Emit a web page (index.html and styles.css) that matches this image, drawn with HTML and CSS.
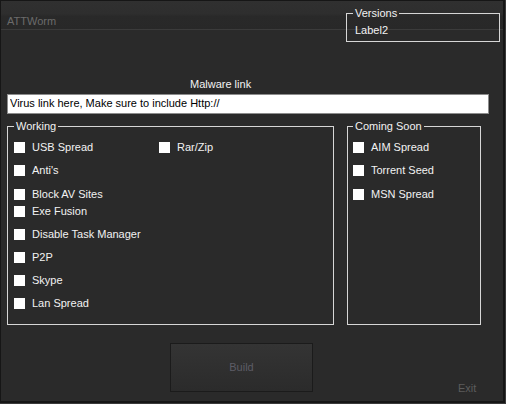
FILE: index.html
```html
<!DOCTYPE html>
<html>
<head>
<meta charset="utf-8">
<title>ATTWorm</title>
<link rel="stylesheet" href="styles.css">
</head>
<body>
<div class="window">
  <div class="titlebar"><span class="title">ATTWorm</span></div>
  <fieldset class="group versions">
    <legend>Versions</legend>
    <div class="version-label">Label2</div>
  </fieldset>
  <div class="content">
    <div class="link-label">Malware link</div>
    <input class="link-input" type="text" value="Virus link here, Make sure to include Http://">
    <div class="groups">
      <fieldset class="group working">
        <legend>Working</legend>
        <div class="checks working-checks">
          <label class="check"><span class="box"></span>USB Spread</label>
          <label class="check rar"><span class="box"></span>Rar/Zip</label>
          <label class="check"><span class="box"></span>Anti's</label>
          <label class="check"><span class="box"></span>Block AV Sites</label>
          <label class="check"><span class="box"></span>Exe Fusion</label>
          <label class="check"><span class="box"></span>Disable Task Manager</label>
          <label class="check"><span class="box"></span>P2P</label>
          <label class="check"><span class="box"></span>Skype</label>
          <label class="check"><span class="box"></span>Lan Spread</label>
        </div>
      </fieldset>
      <fieldset class="group soon">
        <legend>Coming Soon</legend>
        <div class="checks soon-checks">
          <label class="check"><span class="box"></span>AIM Spread</label>
          <label class="check"><span class="box"></span>Torrent Seed</label>
          <label class="check"><span class="box"></span>MSN Spread</label>
        </div>
      </fieldset>
    </div>
    <div class="footer">
      <button class="build" type="button">Build</button>
      <span class="exit">Exit</span>
    </div>
  </div>
</div>
</body>
</html>
```

FILE: styles.css
```css
html, body {
  margin: 0;
  padding: 0;
  background: #3a3a3a;
}

body {
  font-family: "Liberation Sans", Arial, sans-serif;
  font-size: 11px;
  line-height: 13px;
  color: #f2f2f2;
}

.window {
  position: relative;
  box-sizing: border-box;
  width: 505px;
  height: 403px;
  background: #2a2a2a;
  border: 1px solid #161616;
  border-right-width: 2px;
  border-bottom-width: 2px;
  overflow: hidden;
}

.titlebar {
  box-sizing: border-box;
  height: 29px;
  padding: 14px 0 0 6px;
  background: linear-gradient(#303030 0%, #2e2e2e 45%, #292929 55%, #282828 100%);
  border-bottom: 1px solid #3b3b3b;
}

.title {
  color: #6b6b6b;
}

.group {
  margin: 0;
  min-width: 0;
  box-sizing: border-box;
  border: 1px solid #d6d6d6;
  padding: 8px 0 0 6px;
}

.group legend {
  padding: 0 2px;
  color: #f2f2f2;
  line-height: 13px;
}

.versions {
  position: absolute;
  left: 345px;
  top: 6px;
  width: 154px;
  height: 35px;
  padding-top: 4px;
}

.version-label {
  margin-left: 2px;
}

.content {
  padding: 0 6px;
}

.link-label {
  margin-top: 48px;
  padding-left: 183px;
}

.link-input {
  display: block;
  box-sizing: border-box;
  margin: 3px 0 0 0;
  width: 482px;
  height: 20px;
  padding: 0 1px 3px 2px;
  border: 1px solid #8c8c8c;
  background: #ffffff;
  color: #000000;
  font-family: "Liberation Sans", Arial, sans-serif;
  font-size: 11px;
  line-height: 13px;
  outline: none;
}

.groups {
  display: flex;
  gap: 13px;
  margin-top: 6px;
}

.working {
  width: 327px;
  height: 205px;
}

.soon {
  width: 134px;
  height: 205px;
  padding-left: 5px;
}

.checks {
  display: grid;
  align-items: start;
}

.working-checks {
  grid-template-columns: 145px auto;
  grid-template-rows: 23px 24px 17px 23px 23px 23px 23px 13px;
}

.working-checks .check {
  grid-column: 1;
}

.working-checks .rar {
  grid-column: 2;
  grid-row: 1;
}

.soon-checks {
  grid-template-rows: 23px 24px 13px;
}

.check {
  display: flex;
  align-items: center;
  gap: 7px;
  height: 13px;
  white-space: nowrap;
}

.box {
  width: 11px;
  height: 11px;
  background: #ffffff;
  flex: none;
}

.footer {
  display: flex;
  align-items: flex-end;
  margin-top: 18px;
}

.build {
  box-sizing: border-box;
  width: 143px;
  height: 49px;
  margin: 0 0 3px 163px;
  padding: 0;
  border: 1px solid #1b1b1b;
  background: linear-gradient(#343434, #2b2b2b);
  color: #5d5d66;
  font-family: "Liberation Sans", Arial, sans-serif;
  font-size: 11px;
  line-height: 13px;
}

.exit {
  margin-left: 145px;
  color: #5c5c5c;
}
```
